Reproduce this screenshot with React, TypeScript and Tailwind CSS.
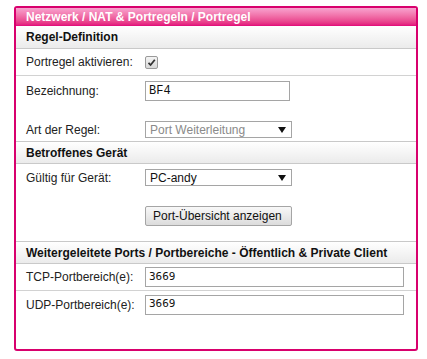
import React from "react";

function SectionHead({ title, top }: { title: string; top?: boolean }) {
  return (
    <div
      className={`h-[23px] flex items-center pl-[10px] bg-gradient-to-b from-[#ffffff] to-[#ebebeb] border-b border-[#c9c9c9] text-[12px] font-bold text-[#111] ${
        top ? "border-t" : ""
      }`}
    >
      {title}
    </div>
  );
}

function Label({ children }: { children: React.ReactNode }) {
  return <span className="w-[119px] shrink-0 text-[12px] text-[#222]">{children}</span>;
}

function FakeSelect({ value, muted }: { value: string; muted?: boolean }) {
  return (
    <div className="w-[147px] h-[17px] border border-[#a5a5a5] bg-white flex items-center pl-[4px] pr-[5px]">
      <span className={`flex-1 text-[12px] leading-none ${muted ? "text-[#8a8a8a]" : "text-[#111]"}`}>{value}</span>
      <svg width="8" height="6" viewBox="0 0 8 6">
        <path d="M0 0 H8 L4 6 Z" fill="#111" />
      </svg>
    </div>
  );
}

export default function App() {
  return (
    <div className="w-[427px] h-[359px] bg-white pt-[6px] pl-[14px] font-['Liberation_Sans',Arial,sans-serif]">
      <div className="w-[404px] h-[345px] border-2 border-[#d8006d] rounded-[3px] flex flex-col overflow-hidden">
        {/* Titel */}
        <div className="h-[18px] shrink-0 flex items-center pl-[10px] bg-gradient-to-b from-[#f7a2cf] to-[#e2007a] text-white text-[12px] font-bold">
          Netzwerk / NAT &amp; Portregeln / Portregel
        </div>

        <SectionHead title="Regel-Definition" />

        <div className="h-[27px] flex items-center pl-[10px] border-b border-[#d2d2d2]">
          <Label>Portregel aktivieren:</Label>
          <div className="w-[13px] h-[13px] border border-[#9a9a9a] rounded-[2px] bg-gradient-to-b from-[#f4f4f4] to-[#d8d8d8] flex items-center justify-center">
            <svg width="9" height="9" viewBox="0 0 9 9">
              <path d="M1.5 4.8 L3.6 7 L7.8 1.8" stroke="#333" strokeWidth="1.8" fill="none" />
            </svg>
          </div>
        </div>

        <div className="h-[65px] flex flex-col pl-[10px] pt-[5px] gap-[20px]">
          <div className="flex items-center h-[20px]">
            <Label>Bezeichnung:</Label>
            <div className="w-[145px] h-[20px] border border-[#a5a5a5] flex items-center pl-[3px] text-[12px] font-['Liberation_Mono',monospace] text-[#111]">
              BF4
            </div>
          </div>
          <div className="flex items-center h-[17px]">
            <Label>Art der Regel:</Label>
            <FakeSelect value="Port Weiterleitung" muted />
          </div>
        </div>

        <SectionHead title="Betroffenes Gerät" top />

        <div className="h-[77px] flex flex-col pl-[10px] pt-[5px] gap-[20px]">
          <div className="flex items-center h-[17px]">
            <Label>Gültig für Gerät:</Label>
            <FakeSelect value="PC-andy" />
          </div>
          <div className="flex items-center h-[20px]">
            <span className="w-[119px]" />
            <button className="w-[147px] h-[20px] border border-[#a5a5a5] rounded-[2px] bg-gradient-to-b from-[#f8f8f8] to-[#dcdcdc] text-[12px] text-[#111] text-left pl-[7px]">
              Port-Übersicht anzeigen
            </button>
          </div>
        </div>

        <SectionHead title="Weitergeleitete Ports / Portbereiche - Öffentlich & Private Client" top />

        <div className="h-[27px] flex items-center pl-[10px] border-b border-[#d2d2d2]">
          <Label>TCP-Portbereich(e):</Label>
          <div className="w-[259px] h-[20px] border border-[#a5a5a5] flex items-center pl-[3px] text-[11px] font-['DejaVu_Sans_Mono',monospace] text-[#111]">
            3669
          </div>
        </div>
        <div className="h-[27px] flex items-center pl-[10px]">
          <Label>UDP-Portbereich(e):</Label>
          <div className="w-[259px] h-[20px] border border-[#a5a5a5] flex items-center pl-[3px] text-[11px] font-['DejaVu_Sans_Mono',monospace] text-[#111]">
            3669
          </div>
        </div>
      </div>
    </div>
  );
}
